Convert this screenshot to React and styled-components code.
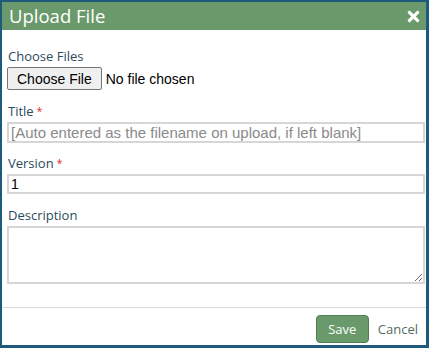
import React from "react";
import styled, { createGlobalStyle } from "styled-components";
import { FaTimes } from "react-icons/fa";

const GlobalStyle = createGlobalStyle`
  html, body, #root {
    margin: 0;
    padding: 0;
    height: 100%;
  }
  body {
    font-family: "Open Sans", "Liberation Sans", sans-serif;
    background: #fff;
  }
`;

const Dialog = styled.div`
  box-sizing: border-box;
  height: 100vh;
  display: flex;
  flex-direction: column;
  border-style: solid;
  border-color: #1d5a7e;
  border-width: 2px 3px 3px 2px;
  background: #fff;
`;

const Header = styled.div`
  height: 28px;
  background: #6a9a6b;
  display: flex;
  align-items: center;
  justify-content: space-between;
  padding: 0 4px 0 7px;
`;

const Heading = styled.h2`
  margin: 0;
  color: #fff;
  font-size: 18.5px;
  font-weight: 400;
  line-height: 28px;
`;

const Close = styled.button`
  border: 0;
  background: none;
  padding: 0;
  color: #fff;
  display: flex;
  cursor: pointer;
`;

const Body = styled.div`
  flex: 1;
  padding: 18px 1px 0 5px;
`;

const Field = styled.div`
  margin-bottom: ${(p) => p.gap || 12}px;
`;

const Label = styled.label`
  display: block;
  font-size: 13px;
  line-height: 16px;
  color: #2c4a5c;
  margin: 0 0 3px 1px;
`;

const Req = styled.span`
  color: #e02020;
  font-size: 10px;
  vertical-align: top;
  margin-left: 3px;
`;

const FileRow = styled.div`
  display: flex;
  align-items: center;
  gap: 4px;
  font-family: "Liberation Sans", Arial, sans-serif;
  font-size: 14px;
  color: #000;
`;

const FileButton = styled.button`
  height: 23px;
  padding: 0 9px;
  font-family: inherit;
  font-size: 14px;
  background: #efefef;
  border: 1px solid #767676;
  border-radius: 2px;
  color: #000;
`;

const Input = styled.input`
  display: block;
  box-sizing: border-box;
  width: 100%;
  height: ${(p) => p.h || 21}px;
  border: 2px solid #d6d6d6;
  padding: 0 2px;
  font-family: "Liberation Sans", Arial, sans-serif;
  font-size: 14px;
  color: #000;
  outline: none;
  &::placeholder {
    font-family: "Liberation Sans", Arial, sans-serif;
    color: #8a8a8a;
    font-size: 15px;
  }
`;

const TextArea = styled.textarea`
  display: block;
  box-sizing: border-box;
  width: 100%;
  height: 58px;
  border: 2px solid #d6d6d6;
  font-family: "Liberation Sans", Arial, sans-serif;
  font-size: 14px;
  outline: none;
`;

const Footer = styled.div`
  border-top: 1px solid #dcdcdc;
  display: flex;
  justify-content: flex-end;
  align-items: center;
  gap: 1px;
  padding: 7px 0 2px;
`;

const SaveButton = styled.button`
  height: 28px;
  width: 53px;
  background: #6a9a6b;
  border: 1px solid #4f7f50;
  border-radius: 4px;
  color: #fff;
  font-family: "Open Sans", sans-serif;
  font-size: 13px;
`;

const LinkButton = styled.button`
  background: none;
  border: 0;
  padding: 0 8px;
  color: #4f6e62;
  font-family: "Open Sans", sans-serif;
  font-size: 13px;
  line-height: 28px;
`;

export default function App() {
  return (
    <>
      <GlobalStyle />
      <Dialog>
        <Header>
          <Heading>Upload File</Heading>
          <Close aria-label="Close">
            <FaTimes size={17} />
          </Close>
        </Header>
        <Body>
          <Field gap={13}>
            <Label>Choose Files</Label>
            <FileRow>
              <FileButton>Choose File</FileButton>
              <span>No file chosen</span>
            </FileRow>
          </Field>
          <Field>
            <Label>
              Title<Req>*</Req>
            </Label>
            <Input placeholder="[Auto entered as the filename on upload, if left blank]" />
          </Field>
          <Field gap={13}>
            <Label>
              Version<Req>*</Req>
            </Label>
            <Input defaultValue="1" h={20} />
          </Field>
          <Field>
            <Label>Description</Label>
            <TextArea />
          </Field>
        </Body>
        <Footer>
          <SaveButton>Save</SaveButton>
          <LinkButton>Cancel</LinkButton>
        </Footer>
      </Dialog>
    </>
  );
}
